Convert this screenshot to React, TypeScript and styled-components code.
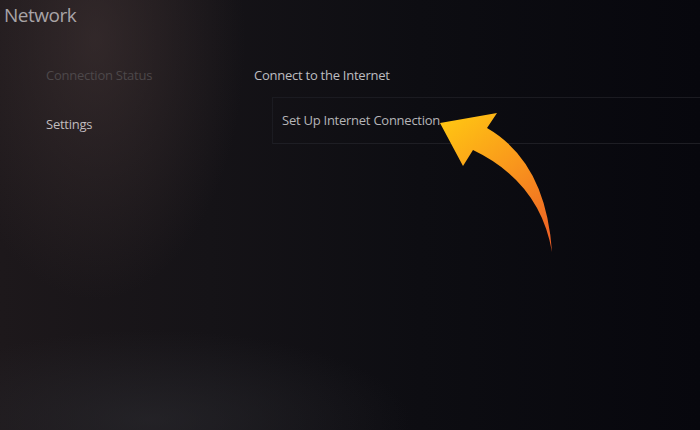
import styled, { createGlobalStyle } from 'styled-components';

const Global = createGlobalStyle`
  html, body {
    margin: 0;
    padding: 0;
    background: #08080d;
  }
  body {
    font-family: 'Open Sans', 'Noto Sans', sans-serif;
  }
`;

const Screen = styled.div`
  position: relative;
  width: 700px;
  height: 430px;
  overflow: hidden;
  background:
    radial-gradient(ellipse 150px 260px at 95px 40px, rgba(70, 55, 55, 0.55), rgba(40, 32, 34, 0) 100%),
    radial-gradient(ellipse 260px 90px at 150px 420px, rgba(45, 45, 50, 0.55), rgba(30, 30, 34, 0) 100%),
    linear-gradient(90deg, #1d181b 0%, #151317 30%, #0d0d12 60%, #07070d 100%);
  display: flex;
  flex-direction: column;
`;

const Title = styled.h1`
  margin: 0;
  padding: 1px 0 0 4px;
  height: 30px;
  font-size: 19px;
  font-weight: 400;
  line-height: 28px;
  color: #a8a4a7;
  letter-spacing: -0.5px;
`;

const Body = styled.div`
  display: grid;
  grid-template-columns: 254px 1fr;
`;

const Nav = styled.nav`
  display: flex;
  flex-direction: column;
  gap: 29px;
  padding: 34px 0 0 46px;
`;

const NavItem = styled.div<{ $active?: boolean }>`
  font-size: 13px;
  line-height: 20px;
  letter-spacing: -0.25px;
  color: ${p => (p.$active ? '#c0bcbe' : '#4d484a')};
`;

const Content = styled.section`
  display: flex;
  flex-direction: column;
  padding-top: 34px;
`;

const SectionHead = styled.div`
  font-size: 13px;
  line-height: 20px;
  letter-spacing: -0.25px;
  color: #bdbdc0;
  margin-bottom: 12px;
`;

const Option = styled.div`
  margin-left: 18px;
  height: 44px;
  display: flex;
  align-items: center;
  padding: 0 0 1px 9px;
  border-top: 1px solid #1b1b21;
  border-bottom: 1px solid #1e1e24;
  border-left: 1px solid #1b1b21;
  font-size: 13px;
  letter-spacing: -0.25px;
  color: #b5b5b8;
`;

const Pointer = styled.svg`
  position: absolute;
  left: 0;
  top: 0;
  pointer-events: none;
`;

function CurvedArrow() {
  return (
    <Pointer width={700} height={430} viewBox="0 0 700 430">
      <defs>
        <linearGradient id="arrowFill" x1="450" y1="120" x2="552" y2="252" gradientUnits="userSpaceOnUse">
          <stop offset="0" stopColor="#ffc313" />
          <stop offset="0.45" stopColor="#f9961c" />
          <stop offset="1" stopColor="#ec5a26" />
        </linearGradient>
      </defs>
      <path
        d="M440,123 L497,113 L487,128 Q546,162 552,252 Q540,182 473,150 L463,166 Z"
        fill="url(#arrowFill)"
      />
    </Pointer>
  );
}

export default function App() {
  return (
    <>
      <Global />
      <Screen>
        <Title>Network</Title>
        <Body>
          <Nav>
            <NavItem>Connection Status</NavItem>
            <NavItem $active>Settings</NavItem>
          </Nav>
          <Content>
            <SectionHead>Connect to the Internet</SectionHead>
            <Option>Set Up Internet Connection</Option>
          </Content>
        </Body>
        <CurvedArrow />
      </Screen>
    </>
  );
}
